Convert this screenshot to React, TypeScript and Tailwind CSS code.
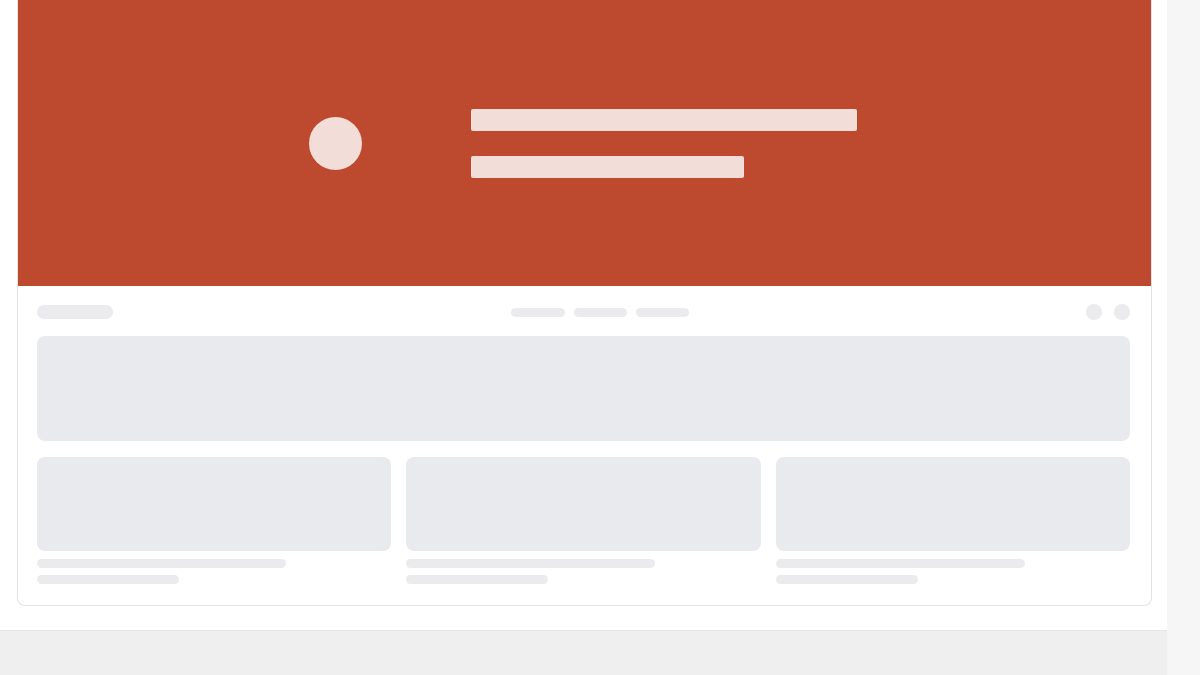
export default function App() {
  return (
    <div className="flex h-[675px] w-[1200px] overflow-hidden bg-[#f6f6f7]">
      <div className="flex w-[1167px] flex-col">
        <div className="h-[631px] border-b border-[#e4e4e6] bg-white pl-[17px] pr-[15px]">
          <div className="flex h-[606px] flex-col overflow-hidden rounded-b-[8px] border-x border-b border-[#e2e2e6] bg-white">
            <div className="flex h-[286px] items-center justify-center gap-[109px] bg-[#bd4a2e] pr-[3px]">
              <div className="h-[53px] w-[53px] rounded-full bg-[#f3ddd8]" />
              <div className="flex flex-col gap-[25px]">
                <div className="h-[22px] w-[386px] rounded-[2px] bg-[#f3ddd8]" />
                <div className="h-[22px] w-[273px] rounded-[2px] bg-[#f3ddd8]" />
              </div>
            </div>
            <div className="flex flex-col pl-[19px] pr-[21px] pt-[19px]">
              <div className="flex h-[14px] items-center justify-between">
                <div className="h-[14px] w-[76px] rounded-full bg-[#ebebee]" />
                <div className="flex gap-[9px]">
                  <div className="h-[9px] w-[54px] rounded-full bg-[#ebebee]" />
                  <div className="h-[9px] w-[53px] rounded-full bg-[#ebebee]" />
                  <div className="h-[9px] w-[53px] rounded-full bg-[#ebebee]" />
                </div>
                <div className="flex gap-[12px]">
                  <div className="h-[16px] w-[16px] rounded-full bg-[#ebebee]" />
                  <div className="h-[16px] w-[16px] rounded-full bg-[#ebebee]" />
                </div>
              </div>
              <div className="mt-[17px] h-[105px] rounded-[8px] bg-[#e9eaee]" />
              <div className="mt-[16px] grid grid-cols-3 gap-[15px]">
                {[0, 1, 2].map((i) => (
                  <div key={i} className="flex flex-col">
                    <div className="h-[94px] rounded-[8px] bg-[#e9eaee]" />
                    <div className="mt-[8px] h-[9px] w-[249px] rounded-full bg-[#ebebee]" />
                    <div className="mt-[7px] h-[9px] w-[142px] rounded-full bg-[#ebebee]" />
                  </div>
                ))}
              </div>
            </div>
          </div>
        </div>
        <div className="flex-1 bg-[#efeff0]" />
      </div>
      <div className="flex-1 bg-[#f6f6f7]" />
    </div>
  );
}
